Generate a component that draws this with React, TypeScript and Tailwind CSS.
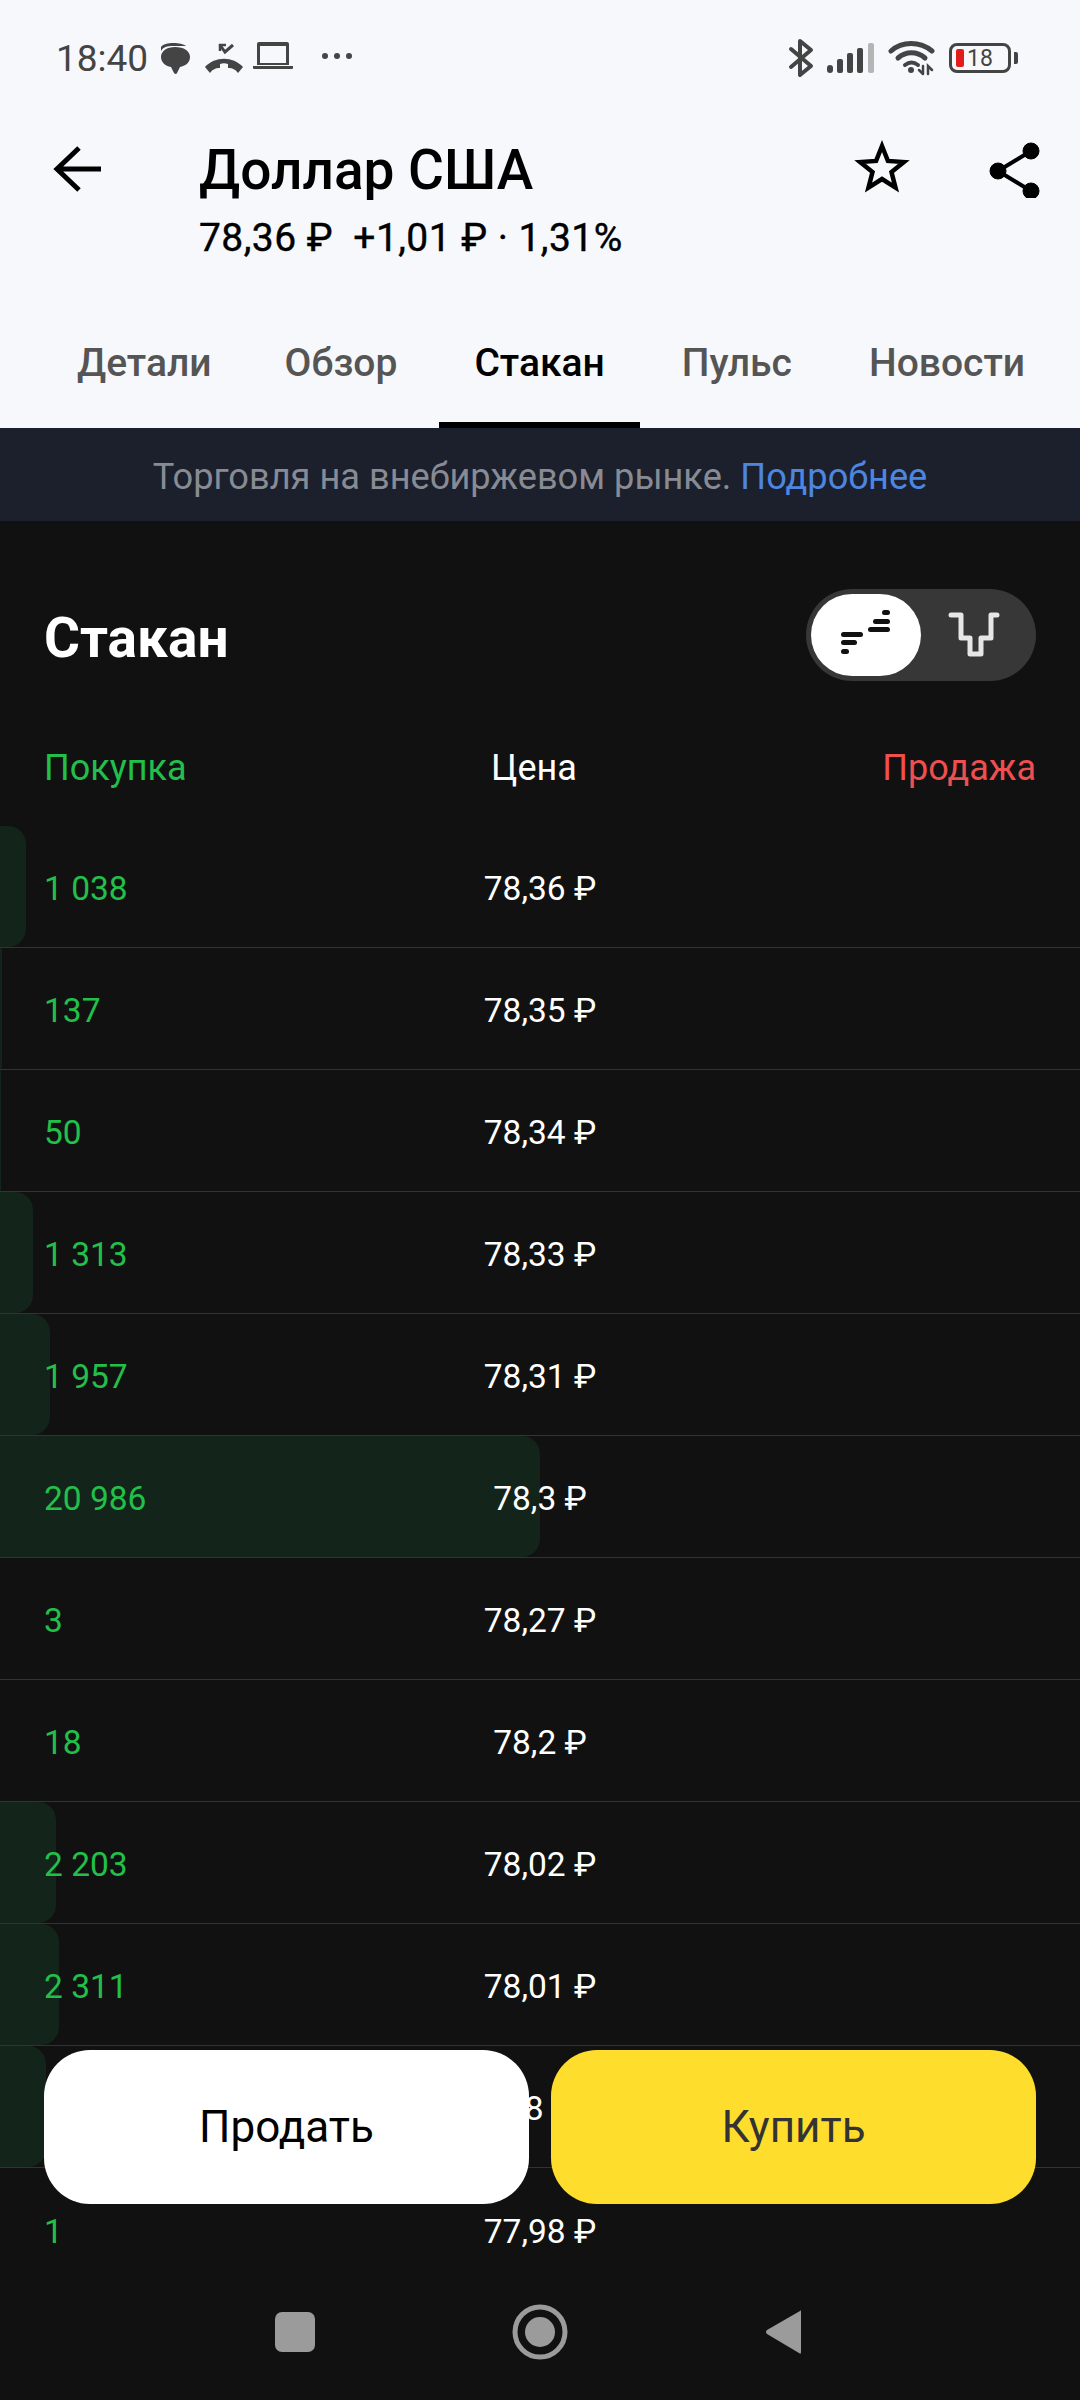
const tabs = ["Детали", "Обзор", "Стакан", "Пульс", "Новости"];

const rows = [
    { qty: "1 038", price: "78,36 ₽", bar: 26 },
    { qty: "137", price: "78,35 ₽", bar: 2 },
    { qty: "50", price: "78,34 ₽", bar: 1 },
    { qty: "1 313", price: "78,33 ₽", bar: 33 },
    { qty: "1 957", price: "78,31 ₽", bar: 50 },
    { qty: "20 986", price: "78,3 ₽", bar: 540 },
    { qty: "3", price: "78,27 ₽", bar: 0 },
    { qty: "18", price: "78,2 ₽", bar: 0 },
    { qty: "2 203", price: "78,02 ₽", bar: 56 },
    { qty: "2 311", price: "78,01 ₽", bar: 59 },
    { qty: "", price: "78 ₽", bar: 46 },
    { qty: "1", price: "77,98 ₽", bar: 0 },
];

const StatusLeftIcons = () => (
    <svg width="210" height="36" viewBox="0 0 210 36" className="ml-[11px] mt-[4px]" fill="#444">
        {/* bubble */}
        <path d="M2 5 C5 0 22 0 27 4 L14 4 C8 4 4 5 2 9Z" />
        <path d="M16 5 C25 5 31 9 31 15 C31 21 26 24 21 25 L18 31 Q17 33 15 31 L12 25 C6 24 2 20 2 15 C2 9 8 5 16 5Z" />
        {/* missed call */}
        <g transform="translate(12 0)">
            <path d="M49 26 C44 26 41 28 39 31 L34 25 C44 14 62 14 72 25 L67 31 C65 28 62 26 57 26 L57 22 C54 21 52 21 49 22Z" />
            <path d="M49 3 L54 10 L62 3" fill="none" stroke="#444" strokeWidth="3" />
            <path d="M49 2 L49 9 M48 3 L55 3" fill="none" stroke="#444" strokeWidth="2.5" />
        </g>
        {/* laptop */}
        <path fillRule="evenodd" d="M98 2 Q98 0 100 0 L128 0 Q130 0 130 2 L130 23 L98 23Z M101 4 L101 21 L127 21 L127 4Z" />
        <path d="M94 24 L134 24 L134 26 Q134 27 133 27 L95 27 Q94 27 94 26Z" />
        {/* dots */}
        <circle cx="166" cy="14" r="3" />
        <circle cx="178" cy="14" r="3" />
        <circle cx="190" cy="14" r="3" />
    </svg>
);

const StatusRightIcons = () => (
    <div className="flex items-center">
        <svg width="26" height="40" viewBox="0 0 26 40" fill="none" stroke="#444" strokeWidth="4" strokeLinejoin="round" strokeLinecap="round">
            <path d="M3 11 L23 28 L12 37 L12 3 L23 12 L3 29" />
        </svg>
        <svg width="50" height="32" viewBox="0 0 50 32" className="ml-[12px]" fill="#444">
            <rect x="1" y="23" width="6" height="8" rx="3" />
            <rect x="11" y="17" width="6" height="14" rx="2" />
            <rect x="21" y="11" width="6" height="20" rx="2" />
            <rect x="31" y="6" width="6" height="25" rx="2" />
            <rect x="42" y="1" width="6" height="30" rx="2" fill="#b5b5b5" />
        </svg>
        <svg width="48" height="36" viewBox="0 0 48 36" className="ml-[12px]" fill="none" stroke="#444" strokeLinecap="round">
            <path d="M3 11 C14 1 32 1 44 11" strokeWidth="5" />
            <path d="M10 18 C18 11 29 11 37 18" strokeWidth="5" />
            <path d="M17 25 C21 22 26 22 30 25" strokeWidth="4" />
            <circle cx="23" cy="30" r="3" fill="#444" stroke="none" />
            <path d="M35 26 L35 34 M31 30 L35 34 M40 34 L40 26 L44 30" strokeWidth="2.5" />
        </svg>
        <div className="relative ml-[13px] flex h-[30px] w-[62px] items-center rounded-[8px] border-[3px] border-[#444]">
            <div className="ml-[4px] h-[18px] w-[8px] rounded-[2px] bg-[#e21b1b]" />
            <span className="ml-[3px] text-[23px] leading-none text-[#444]">18</span>
        </div>
        <div className="ml-[3px] h-[12px] w-[4px] rounded-r-[2px] bg-[#444]" />
    </div>
);

const DepthIcon = () => (
    <svg width="50" height="44" viewBox="0 0 50 44" fill="#111" className="mb-[6px]">
        <rect x="0" y="22" width="22" height="5" rx="2.5" />
        <rect x="0" y="30" width="16" height="5" rx="2.5" />
        <rect x="0" y="39" width="8" height="5" rx="2.5" />
        <rect x="27" y="17" width="22" height="5" rx="2.5" />
        <rect x="32" y="9" width="17" height="5" rx="2.5" />
        <rect x="41" y="0" width="8" height="5" rx="2.5" />
    </svg>
);

const ChartIcon = () => (
    <svg width="52" height="46" viewBox="0 0 52 46" fill="none" stroke="#e6e6e6" strokeWidth="5" strokeLinecap="round" strokeLinejoin="round">
        <path d="M3 3 L13 3 L13 26 L22 26 L22 42 L33 42 L33 26 L43 26 L43 3 L49 3" />
    </svg>
);

export default function App() {
    return (
        <div className="relative flex h-[2400px] w-[1080px] flex-col overflow-hidden bg-[#111111] font-['Roboto',sans-serif]">
            <div className="h-[428px] shrink-0 bg-[#f6f8fb]">
                <div className="flex h-[116px] items-center justify-between pl-[56px] pr-[62px]">
                    <div className="flex items-center">
                        <span className="text-[37px] leading-none text-[#444]">18:40</span>
                        <StatusLeftIcons />
                    </div>
                    <StatusRightIcons />
                </div>
                <div className="flex pl-[51px] pr-[38px] pt-[21px]">
                    <svg width="50" height="50" viewBox="0 0 50 50" className="mt-[8px]" fill="none" stroke="#000" strokeWidth="5">
                        <path d="M50 24 L6 24 M28 3 L6 24 L28 45" />
                    </svg>
                    <div className="ml-[98px] flex-1 text-black">
                        <div className="text-[55px] font-medium leading-[66px]">Доллар США</div>
                        <div className="mt-[12px] whitespace-pre text-[39px] leading-[46px] tracking-[0.45px] [-webkit-text-stroke:0.4px_#000]">78,36 ₽  +1,01 ₽ · 1,31%</div>
                    </div>
                    <svg width="62" height="62" viewBox="0 0 62 62" className="mt-[1px]" fill="none" stroke="#000" strokeWidth="4.5" strokeLinejoin="miter">
                        <path d="M31 8 L36.9 22.9 L52.9 24 L40.5 34.1 L44.5 49.6 L31 41 L17.5 49.6 L21.5 34.1 L9.1 24 L25.1 22.9Z" />
                    </svg>
                    <svg width="54" height="58" viewBox="0 0 54 58" className="ml-[75px] mt-[3px]" fill="#000" stroke="#000">
                        <circle cx="43" cy="11" r="8" />
                        <circle cx="10" cy="31" r="8" />
                        <circle cx="43" cy="51" r="8" />
                        <path d="M43 11 L10 31 L43 51" fill="none" strokeWidth="4" />
                    </svg>
                </div>
                <div className="mt-[37px] flex h-[130px] gap-[7px] pl-[42px]">
                    {tabs.map((tab, i) => (
                        <div
                            key={tab}
                            className={tab == "Стакан"
                                ? "flex h-full items-center border-b-[6px] border-black px-[35px] pt-[6px] text-[39px] font-medium text-black"
                                : i == 0
                                    ? "flex h-full items-center pl-[35px] pr-[31px] text-[39px] font-medium text-[#555]"
                                    : "flex h-full items-center px-[35px] text-[39px] font-medium text-[#555]"}
                        >
                            {tab}
                        </div>
                    ))}
                </div>
            </div>

            <div className="flex h-[93px] shrink-0 items-center justify-center bg-[#1b202c] pt-[5px] text-[36.2px] text-[#888b94]">
                <span>Торговля на внебиржевом рынке.&nbsp;</span>
                <span className="text-[#4d86e0]">Подробнее</span>
            </div>

            <div className="flex items-center justify-between px-[44px] pt-[68px]">
                <div className="pt-[6px] text-[55px] font-bold leading-none text-white">Стакан</div>
                <div className="flex h-[92px] w-[230px] rounded-full bg-[#373737] p-[5px]">
                    <div className="flex h-[82px] w-[110px] items-center justify-center rounded-full bg-white">
                        <DepthIcon />
                    </div>
                    <div className="flex flex-1 items-center justify-center pr-[5px]">
                        <ChartIcon />
                    </div>
                </div>
            </div>

            <div className="mb-[39px] mt-[60px] grid h-[46px] grid-cols-3 items-center px-[44px] text-[36px]">
                <span className="text-[#22c04a]">Покупка</span>
                <span className="pr-[12px] text-center text-white">Цена</span>
                <span className="text-right text-[#ee4f4f]">Продажа</span>
            </div>

            <div className="flex-1 overflow-hidden">
                {rows.map((row, i) => (
                    <div
                        key={i}
                        className={i == rows.length - 1
                            ? "relative grid h-[122px] grid-cols-3 items-center px-[44px] text-[33.5px]"
                            : "relative grid h-[122px] grid-cols-3 items-center border-b border-[#333333] px-[44px] text-[33.5px]"}
                    >
                        {row.bar > 0 && (
                            <div className="absolute inset-y-0 left-0 rounded-r-[18px] bg-[#13241a]" style={{ width: row.bar }} />
                        )}
                        <span className="relative pt-[6px] text-[#22c04a]">{row.qty}</span>
                        <span className="relative whitespace-nowrap pt-[6px] text-center text-white">{row.price}</span>
                    </div>
                ))}
            </div>

            <div className="flex h-[110px] shrink-0 items-center justify-center pb-[26px]">
                <svg width="540" height="60" viewBox="0 0 540 60">
                    <rect x="5" y="10" width="40" height="40" rx="7" fill="#9b9b9b" />
                    <circle cx="270" cy="30" r="25" fill="none" stroke="#9b9b9b" strokeWidth="5" />
                    <circle cx="270" cy="30" r="15" fill="#9b9b9b" />
                    <path d="M530 9 Q531 7 531 10 L531 50 Q531 53 529 51 L497 32 Q495 30 497 28Z" fill="#9b9b9b" />
                </svg>
            </div>

            <div className="absolute left-[44px] top-[2050px] flex h-[154px] w-[992px] gap-[22px] text-[44px]">
                <div className="flex flex-1 items-center justify-center rounded-[46px] bg-white text-black">Продать</div>
                <div className="flex flex-1 items-center justify-center rounded-[46px] bg-[#ffdd2d] text-[#333]">Купить</div>
            </div>
        </div>
    );
}
